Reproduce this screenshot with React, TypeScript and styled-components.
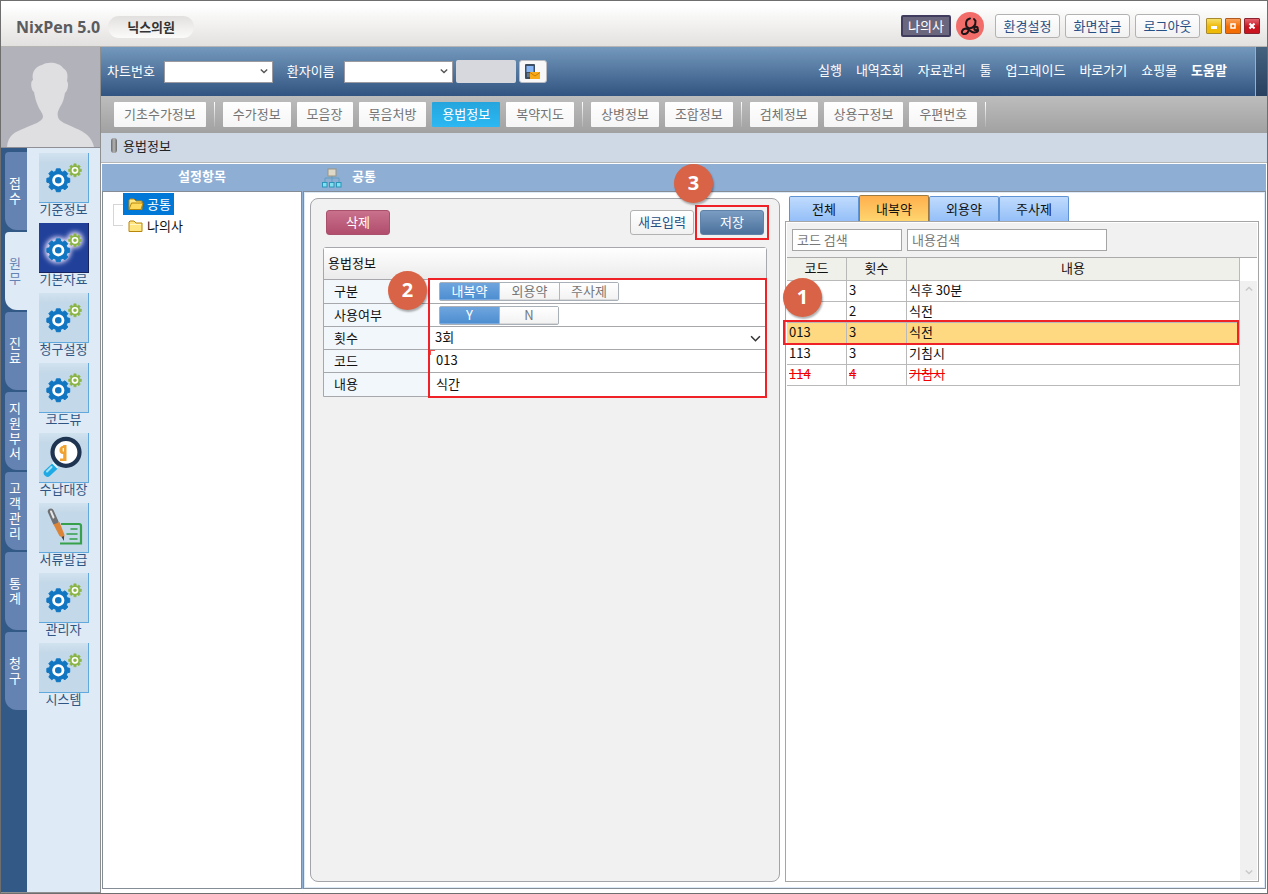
import React from 'react';
import styled, { createGlobalStyle, css } from 'styled-components';

const Global = createGlobalStyle`
  *, *::before, *::after { box-sizing: border-box; }
  body { margin: 0; }
  body, button, input, select {
    font-family: "Noto Sans CJK KR", sans-serif;
    font-size: 13px;
    line-height: 16px;
  }
  button, input, select { margin: 0; padding: 0; border: 0; border-radius: 0; background: none; color: inherit; }
  a { color: inherit; text-decoration: none; }
`;

/* ---------- frame ---------- */

const Window = styled.div`
  display: flex;
  flex-direction: column;
  min-height: 100vh;
  border: 1px solid #6e6e6e;
  background: #fff;
  color: #111;
`;

const TitleBar = styled.header`
  display: flex;
  align-items: center;
  height: 46px;
  padding: 6px 7px 0 15px;
  border-bottom: 1px solid #b7b5b3;
  background: linear-gradient(#fff 10%, #e3e1df);
`;

const AppName = styled.h1`
  flex: none;
  margin: 0 8px 0 0;
  font: bold 16px/22px "Open Sans", "Noto Sans", sans-serif;
  color: #5b5c5e;
`;

const ClinicName = styled.div`
  padding: 0 19px;
  border-radius: 11px;
  background: linear-gradient(#e2e0de, #fbfbfa);
  color: #333;
  font-weight: bold;
  line-height: 22px;
  white-space: nowrap;
`;

const TitleTools = styled.div`
  display: flex;
  align-items: center;
  gap: 5px;
  height: 28px;
  margin: 0 0 2px auto;
`;

const UserTag = styled.span`
  padding: 0 5px;
  border: 2px solid #403c5e;
  border-radius: 2px;
  background: #6a667d;
  color: #fff;
  line-height: 18px;
`;

const RoleIcon = styled.svg`
  width: 28px;
  height: 28px;
  margin-right: 6px;
`;

const PlainButton = styled.button`
  height: 24px;
  min-width: 65px;
  padding: 0 7px;
  border: 1px solid #b4b2b0;
  border-radius: 3px;
  background: linear-gradient(#fff, #f1f1f1);
  color: #264f85;
  white-space: nowrap;
`;

const WindowButtons = styled.div`
  display: flex;
  gap: 3px;
  margin-left: 1px;
`;

const WindowButton = styled.button<{ $from: string; $to: string; $edge: string }>`
  display: grid;
  place-items: center;
  width: 16px;
  height: 16px;
  border: 1px solid ${p => p.$edge};
  border-radius: 1px;
  background: linear-gradient(${p => p.$from}, ${p => p.$to} 55%);
`;

const Body = styled.div`
  display: flex;
  flex: 1;
`;

/* ---------- sidebar ---------- */

const Sidebar = styled.aside`
  display: flex;
  flex-direction: column;
  flex: none;
  width: 100px;
  border-right: 1px solid #8f8f8f;
  border-bottom: 1px solid #8f8f8f;
`;

const Photo = styled.svg`
  display: block;
  width: 100%;
  height: 101px;
  border-bottom: 1px solid #8f8f95;
  background: #b2b2bb;
`;

const SideColumns = styled.div`
  display: flex;
  flex: 1;
`;

const SideTabs = styled.nav`
  display: flex;
  flex-direction: column;
  gap: 2px;
  width: 26px;
  padding: 4px 0 0 4px;
  background: #335a86;
`;

const SideTab = styled.button<{ $active?: boolean }>`
  display: grid;
  place-items: center;
  height: 78px;
  padding: 0 2px 2px 0;
  border-radius: 4px 0 0 12px;
  background: ${p => (p.$active ? '#deeaf6' : '#6583b2')};
  color: ${p => (p.$active ? '#6583b2' : '#fff')};
  line-height: 15px;
`;

const StackedText = styled.span`
  width: 12px;
  word-break: break-all;
`;

const SideMenu = styled.nav`
  display: flex;
  flex-direction: column;
  align-items: center;
  gap: 4px;
  flex: 1;
  padding-top: 5px;
  background: #deeaf6;
`;

const SideItem = styled.a`
  display: flex;
  flex-direction: column;
  align-items: center;
  height: 66px;
  color: #2f5683;
  line-height: 12px;
  white-space: nowrap;
`;

const Tile = styled.svg<{ $active?: boolean }>`
  display: block;
  width: 50px;
  height: 50px;
  border-right: 1px solid ${p => (p.$active ? '#16235e' : '#61a9dd')};
  border-bottom: 1px solid ${p => (p.$active ? '#16235e' : '#61a9dd')};
  background: ${p => (p.$active ? '#20409a' : 'linear-gradient(#d2e2ef, #c3d8e8 20%)')};
`;

/* ---------- header and toolbars ---------- */

const Main = styled.main`
  display: flex;
  flex-direction: column;
  flex: 1;
  min-width: 0;
`;

const Header = styled.div`
  display: flex;
  align-items: center;
  height: 49px;
  padding-left: 6px;
  background: linear-gradient(#7499bd, #315480);
  color: #fff;
  white-space: nowrap;
`;

const FieldLabel = styled.label`
  margin-right: 9px;
  padding-bottom: 2px;
`;

const Chooser = styled.span<{ $wide?: boolean }>`
  position: relative;
  display: block;
  ${p => (p.$wide ? 'flex: 1; height: 22px;' : 'width: 109px; height: 22px; margin-right: 14px;')}

  &:nth-of-type(2) { margin-right: 3px; }

  select {
    width: 100%;
    height: 100%;
    padding: 0 5px 2px;
    appearance: none;
    ${p => !p.$wide && css`border: 1px solid #9a9aa0;`}
    background: #fff;
    color: #111;
  }
  svg {
    position: absolute;
    right: 5px;
    top: 50%;
    margin-top: -5px;
    pointer-events: none;
  }
`;

const ReadOnlyBox = styled.output`
  width: 60px;
  height: 23px;
  margin-right: 3px;
  border-radius: 2px;
  background: #d6d8dd;
`;

const MessageButton = styled.button`
  display: grid;
  place-items: center;
  width: 28px;
  height: 23px;
  border: 1px solid #b9bcc2;
  border-radius: 3px;
  background: #f8f8f8;
`;

const TopMenu = styled.nav`
  display: flex;
  align-items: center;
  gap: 14px;
  height: 100%;
  margin-left: auto;
  padding: 0 28px 4px 0;
  border-right: 1px solid #a5adb8;

  a:last-child { font-weight: bold; }
`;

const HeaderEnd = styled.div`
  width: 11px;
  height: 100%;
  background: linear-gradient(#45627f, #294060);
`;

const ToolRow = styled.nav`
  display: flex;
  align-items: center;
  gap: 6px;
  height: 37px;
  padding-left: 13px;
  background: linear-gradient(#bdbdbd, #a1a1a1);
`;

const ToolButton = styled.button<{ $active?: boolean }>`
  height: 25px;
  padding: 0 10px 2px;
  border-radius: 1px;
  background: ${p => (p.$active ? 'linear-gradient(#25a5dd, #2cb8f3)' : 'linear-gradient(#fff, #f5f5f5)')};
  color: ${p => (p.$active ? '#fff' : '#747474')};
  white-space: nowrap;
`;

const ToolDivider = styled.span`
  width: 1px;
  height: 25px;
  margin: 0 2px;
  background: linear-gradient(#fff, #b0b0b0);
`;

const Crumb = styled.div`
  display: flex;
  align-items: center;
  gap: 6px;
  height: 30px;
  padding: 0 10px 4px;
  border-bottom: 1px solid #b4b6b8;
  background: #cfd9e5;
  color: #222;

  &::before {
    content: "";
    width: 6px;
    height: 15px;
    border-radius: 3px;
    background: linear-gradient(90deg, #6a6a6a, #b4b4b4, #6a6a6a);
  }
`;

/* ---------- content ---------- */

const Content = styled.div`
  display: flex;
  flex-direction: column;
  flex: 1;
  padding: 1px 1px 4px 1px;
`;

const ContentHead = styled.div`
  display: flex;
  height: 27px;
  background: #8eaed4;
  color: #fff;
`;

const HeadTitle = styled.h2`
  display: flex;
  align-items: center;
  justify-content: center;
  gap: 10px;
  margin: 0;
  padding-bottom: 3px;
  font-size: 13px;
  line-height: 20px;

  &:first-child { width: 200px; }
  &:last-child { padding-left: 20px; }
  svg { margin-top: 4px; }
`;

const Columns = styled.div`
  display: flex;
  flex: 1;
  gap: 1px;
  background: #8eaed4;
`;

const Tree = styled.ul`
  flex: none;
  width: 200px;
  margin: 0;
  padding: 1px 0 0 10px;
  border: 1px solid #868c96;
  background: #fff;
  list-style: none;
`;

const TreeItem = styled.li`
  display: flex;
  align-items: center;
  height: 22px;
`;

const Branch = styled.span<{ $last?: boolean }>`
  align-self: ${p => (p.$last ? 'flex-start' : 'flex-end')};
  width: 10px;
  height: 11px;
  border-left: 1px solid #d6d6d6;
  ${p => (p.$last ? 'border-bottom' : 'border-top')}: 1px solid #d6d6d6;
`;

const TreeLabel = styled.a<{ $selected?: boolean }>`
  display: flex;
  align-items: center;
  gap: 3px;
  height: 22px;
  padding: 0 3px 0 5px;
  background: ${p => (p.$selected ? '#0078d7' : 'transparent')};
  color: ${p => (p.$selected ? '#fff' : '#111')};
`;

const Workspace = styled.div`
  display: grid;
  flex: 1;
  grid-template-columns: minmax(0, 470fr) minmax(0, 474fr);
  gap: 5px;
  padding: 6px;
  border: 1px solid #868c96;
  box-shadow: inset 0 0 0 1px #dce9f6;
  background: #fff;
`;

const FormCard = styled.section`
  padding: 11px 12px;
  border: 1px solid #a2a4aa;
  border-radius: 8px;
  background: #f1f1f1;
`;

const Actions = styled.div`
  display: flex;
  gap: 6px;
  margin: 0 3px 12px;
`;

const ActionButton = styled(PlainButton)<{ $tone?: 'delete' | 'save' }>`
  height: 25px;
  min-width: 64px;
  padding-bottom: 2px;
  ${p => p.$tone === 'delete' && css`
    margin-right: auto;
    border-color: #a8506c;
    background: linear-gradient(#c9718c, #b14d6d);
    color: #fff;
  `}
  ${p => p.$tone === 'save' && css`
    border-color: #5f82a8;
    background: linear-gradient(#7a9cc2, #4b729c);
    color: #fff;
  `}
`;

const Marked = styled.div`
  position: relative;
  display: flex;
`;

const MarkBox = styled.span<{ $top: number; $right: number; $left: number; $bottom?: number; $height?: number }>`
  position: absolute;
  top: ${p => p.$top}px;
  right: ${p => p.$right}px;
  left: ${p => p.$left}px;
  ${p => (p.$height ? `height: ${p.$height}px;` : `bottom: ${p.$bottom}px;`)}
  border: 2px solid #ee2227;
  pointer-events: none;
`;

const StepBadge = styled.span<{ $top: number; $left: number }>`
  position: absolute;
  z-index: 1;
  top: ${p => p.$top}px;
  left: ${p => p.$left}px;
  width: 39px;
  height: 39px;
  border-radius: 50%;
  background: #d96346;
  box-shadow: 1px 2px 2px rgba(0, 0, 0, 0.3);
  color: #fff;
  font: bold 20px/37px "Open Sans", "Noto Sans", sans-serif;
  text-align: center;
`;

const Form = styled.form`
  position: relative;
  border: 1px solid #a6a8ac;
  border-radius: 3px 3px 0 0;
  background: #fff;
`;

const FormTitle = styled.h3`
  margin: 0;
  padding: 0 0 2px 4px;
  background: linear-gradient(#fff, #ebebeb);
  font-size: 13px;
  font-weight: normal;
  line-height: 29px;
`;

const FormRow = styled.div<{ $tall?: boolean }>`
  display: flex;
  align-items: stretch;
  height: ${p => (p.$tall ? 24 : 23)}px;
  border-top: 1px solid #a6a8ac;
`;

const RowLabel = styled.label`
  flex: none;
  width: 106px;
  padding-left: 10px;
  border-right: 1px solid #a6a8ac;
  background: #f2f7fb;
  line-height: 21px;
`;

const TextInput = styled.input`
  flex: 1;
  min-width: 0;
  padding: 0 0 2px 6px;
`;

const Segments = styled.div`
  display: flex;
  align-self: center;
  height: 19px;
  margin-left: 9px;
  border: 1px solid #a9b0b8;
  border-radius: 2px;
`;

const Segment = styled.button<{ $on?: boolean }>`
  width: 60px;
  padding-bottom: 2px;
  border-right: 1px solid #b5b5b5;
  background: ${p => (p.$on ? 'linear-gradient(#6fa5de, #4c8dd0)' : 'linear-gradient(#fff, #f2f2f2)')};
  box-shadow: inset 0 -1px 0 ${p => (p.$on ? '#78aae0' : '#dadada')};
  color: ${p => (p.$on ? '#fff' : '#777')};
  &:last-child { width: 58px; border-right: 0; }
`;

const Corner = styled.span`
  position: absolute;
  left: 106px;
  top: 102px;
  width: 5px;
  height: 5px;
  border-top: 1px solid #ee5050;
  border-left: 1px solid #ee5050;
`;

/* ---------- list ---------- */

const ListSide = styled.section`
  position: relative;
  display: flex;
  flex-direction: column;
`;

const Tabs = styled.div`
  display: flex;
  align-items: flex-end;
  height: 24px;
  margin: -1px 0 0 4px;
`;

const Tab = styled.button<{ $active?: boolean }>`
  width: 70px;
  height: ${p => (p.$active ? 26 : 25)}px;
  border: 1px solid ${p => (p.$active ? '#9b7a45' : '#5f93d4')};
  border-bottom: 0;
  border-radius: 2px 2px 0 0;
  background: ${p => (p.$active ? 'linear-gradient(#ffb04d, #ffd56f)' : 'linear-gradient(#c0dbfd, #94bff8)')};
`;

const ListPanel = styled.div`
  display: flex;
  flex-direction: column;
  flex: 1;
  padding: 1px;
  border: 1px solid #a5a5a5;
`;

const SearchBar = styled.div`
  display: flex;
  gap: 5px;
  height: 35px;
  padding: 6px 0 0 5px;
  border-bottom: 1px solid #ababab;
  background: #f1f1f1;
`;

const SearchInput = styled.input<{ $wide?: boolean }>`
  width: ${p => (p.$wide ? 200 : 110)}px;
  height: 22px;
  padding: 0 4px 2px;
  border: 1px solid #a5a5a5;
  background: #fff;
  &::placeholder { color: #777; opacity: 1; }
`;

const ListBody = styled.div`
  display: flex;
  flex: 1;
`;

const TableArea = styled.div`
  position: relative;
  flex: 1;
  min-width: 0;
`;

const Table = styled.table`
  width: 100%;
  table-layout: fixed;
  border-collapse: separate;
  border-spacing: 0;

  th, td {
    height: 21px;
    padding: 0 2px;
    border-right: 1px solid #b9b9b9;
    border-bottom: 1px solid #b9b9b9;
    line-height: 17px;
    text-align: left;
    vertical-align: top;
  }
  th {
    height: 23px;
    background: #f0f0eb;
    font-weight: normal;
    line-height: 20px;
    text-align: center;
  }
  th:not(:last-child) { width: 60px; }
`;

const DataRow = styled.tr<{ $state?: 'selected' | 'stopped' }>`
  ${p => p.$state === 'selected' && css`background: #ffd982;`}
  ${p => p.$state === 'stopped' && css`color: #f00000; text-decoration: line-through;`}
`;

const ScrollTrack = styled.div`
  display: flex;
  flex-direction: column;
  justify-content: space-between;
  align-items: center;
  width: 17px;
  margin-top: 23px;
  padding: 4px 0;
  background: #f0f0f0;
`;

/* ---------- drawings ---------- */

const Chevron = ({ up = false, color = '#555', size = 8, weight = 1.7 }: { up?: boolean; color?: string; size?: number; weight?: number }) => (
  <svg width={size} height={size} viewBox="0 0 10 10" fill="none" stroke={color} strokeWidth={weight} aria-hidden="true">
    <path d={up ? 'M1 7l4-4 4 4' : 'M1 3l4 4 4-4'} />
  </svg>
);

const gearPath = (cx: number, cy: number, outer: number, inner: number) => {
  const points: string[] = [];
  for (let i = 0; i < 8; i++) {
    const mid = (i * Math.PI) / 4;
    [[-0.27, inner], [-0.17, outer], [0.17, outer], [0.27, inner]].forEach(([turn, r]) => {
      points.push(`${(cx + r * Math.sin(mid + turn)).toFixed(2)} ${(cy - r * Math.cos(mid + turn)).toFixed(2)}`);
    });
  }
  return `M${points.join('L')}Z`;
};

const Gears = ({ glow = false }: { glow?: boolean }) => (
  <>
    {glow && (
      <g filter="url(#soft)" fill="#f3e6ff">
        <circle cx="19" cy="27" r="13" />
        <circle cx="36" cy="17" r="8" />
        <defs>
          <filter id="soft" x="-50%" y="-50%" width="200%" height="200%"><feGaussianBlur stdDeviation="2.4" /></filter>
        </defs>
      </g>
    )}
    <path d={gearPath(19.3, 27.3, 11.6, 9.3)} fill="#1176c2" stroke="#1176c2" strokeWidth="1" strokeLinejoin="round" />
    <circle cx="19.3" cy="27.3" r="4.7" fill="#1176c2" stroke="#fff" strokeWidth="2.8" />
    <path d={gearPath(36, 17.3, 6.6, 5)} fill="#8ab445" stroke="#8ab445" strokeWidth=".5" strokeLinejoin="round" />
    <circle cx="36" cy="17.3" r="2.6" fill="#8ab445" stroke="#fff" strokeWidth="1.6" />
  </>
);

const Magnifier = () => (
  <>
    <path d="M8.500 40L15.500 33.500" stroke="#1eaae4" strokeWidth="7.500" strokeLinecap="round" />
    <path d="M8 38.500l4.500-4.500" stroke="#a5e2fa" strokeWidth="2" strokeLinecap="round" />
    <path d="M13.500 29.500l5.500 5.500" stroke="#e8f1f8" strokeWidth="2" />
    <circle cx="27" cy="19.300" r="13.500" fill="#fff" stroke="#1f3450" strokeWidth="4.2" />
    <path d="M27.500 12v16h-6.500v-2.500h3.200v-4.500c-5 .5-5-8 0-8.300v-.7z" fill="#f0a330" />
    <path d="M24.300 15v3.500" stroke="#fff" strokeWidth="1.2" />
  </>
);

const PenNote = () => (
  <>
    <path d="M22 21h18q2 0 2 2v17.500H21" fill="none" stroke="#36a04b" strokeWidth="2.2" />
    <path d="M32 26h6M28 31h10M31 36h7" stroke="#36a04b" strokeWidth="1.5" strokeLinecap="round" />
    <path d="M11.800 8.500l4.700 10.500" stroke="#707174" strokeWidth="6" strokeLinecap="round" />
    <path d="M12 8.500l2.500 6" stroke="#e4e7ea" strokeWidth="2" strokeLinecap="round" />
    <path d="M14.500 21.500l6-2.500 5 13-.5 3-4.500-2z" fill="#db8437" />
    <path d="M22.500 34l2.500-1v5z" fill="#444" />
  </>
);

const Folder = ({ open = false }: { open?: boolean }) => (
  <svg width="16" height="14" viewBox="0 0 16 14" aria-hidden="true">
    <path d="M1 12.500V3l1-1h4l2 2h6v8.500z" fill="#ffe680" stroke="#b8860b" />
    {open
      ? <path d="M1 12.500L3.500 6H15l-2 6.500z" fill="#ffd95a" stroke="#b8860b" />
      : <path d="M2 5.500h11" stroke="#fff6c4" />}
  </svg>
);

const Hierarchy = () => (
  <svg width="20" height="20" viewBox="0 0 20 20" aria-hidden="true">
    <path d="M10 7v7M3 14v-4h14v4" fill="none" stroke="#5f9fc0" />
    <rect x="6" y="1" width="8" height="7" fill="#ddd8c8" stroke="#9a9482" />
    {[1, 8, 15].map(x => <rect key={x} x={x - 0.5} y="14.500" width="4.500" height="4.500" fill="#7fe0f2" stroke="#2d96b8" />)}
  </svg>
);

/* ---------- data ---------- */

const sideTabs = ['접수', '원무', '진료', '지원부서', '고객관리', '통계', '청구'];

const sideItems: { name: string; art?: 'lens' | 'pen' }[] = [
  { name: '기준정보' },
  { name: '기본자료' },
  { name: '청구설정' },
  { name: '코드뷰' },
  { name: '수납대장', art: 'lens' },
  { name: '서류발급', art: 'pen' },
  { name: '관리자' },
  { name: '시스템' },
];

const topMenu = ['실행', '내역조회', '자료관리', '툴', '업그레이드', '바로가기', '쇼핑몰', '도움말'];

const toolGroups = [
  ['기초수가정보'],
  ['수가정보', '모음장', '묶음처방', '용법정보', '복약지도'],
  ['상병정보', '조합정보'],
  ['검체정보', '상용구정보', '우편번호'],
];

const rows: { code: string; count: string; text: string; state?: 'selected' | 'stopped' }[] = [
  { code: '', count: '3', text: '식후 30분' },
  { code: '', count: '2', text: '식전' },
  { code: '013', count: '3', text: '식전', state: 'selected' },
  { code: '113', count: '3', text: '기침시' },
  { code: '114', count: '4', text: '기침시', state: 'stopped' },
];

export default function App() {
  return (
    <Window>
      <Global />
      <TitleBar>
        <AppName>NixPen 5.0</AppName>
        <ClinicName>닉스의원</ClinicName>
        <TitleTools>
          <UserTag>나의사</UserTag>
          <RoleIcon viewBox="0 0 28 28" role="img" aria-label="의사">
            <circle cx="14" cy="14" r="14" fill="#f26d69" />
            <g fill="none" stroke="#1c1416" strokeWidth="2" strokeLinecap="round">
              <path d="M14 6.500c-5 1-5 8-1.500 9.500 4 1 7.500-2.500 7-7L18 7" />
              <path d="M12 16c2 4-2 6.500-4.500 6-3-1-1.500-5 2-5.500 4 0 5 4.500 9 4 2.500-.3 4-1 3.500-2.500" />
              <circle cx="20" cy="16.500" r="1.700" />
            </g>
          </RoleIcon>
          <PlainButton>환경설정</PlainButton>
          <PlainButton>화면잠금</PlainButton>
          <PlainButton>로그아웃</PlainButton>
          <WindowButtons>
            <WindowButton $from="#f5df6a" $to="#efb908" $edge="#a88a2c" aria-label="최소화">
              <svg width="8" height="8"><rect x="1" y="4" width="6" height="3" fill="#fff" /></svg>
            </WindowButton>
            <WindowButton $from="#f9a25a" $to="#f46c04" $edge="#b05a20" aria-label="최대화">
              <svg width="8" height="8"><rect x="2" y="2" width="4" height="4" fill="none" stroke="#fff" strokeWidth="1.500" /></svg>
            </WindowButton>
            <WindowButton $from="#e4626c" $to="#c9141f" $edge="#8c2430" aria-label="닫기">
              <svg width="8" height="8"><path d="M1.500 1.500l5 5M6.500 1.500l-5 5" stroke="#fff" strokeWidth="2.200" /></svg>
            </WindowButton>
          </WindowButtons>
        </TitleTools>
      </TitleBar>

      <Body>
        <Sidebar>
          <Photo viewBox="0 0 99 100" preserveAspectRatio="xMidYMax meet" aria-hidden="true">
            <path
              fill="#dfdfe1"
              d="M6 100c1-12 8-15 18-19 9-4 17-6 18-11 0-4-3-6-5-11-2-4-3-9-4-14-3-2-4-11-1-12-2-9 4-14 9-15 6-4 18-2 21 3 5 3 5 8 4 13 2 2 1 10-2 12-1 5-2 10-5 14-2 4-3 6-2 10 1 5 9 7 17 11 10 4 17 9 19 19z"
            />
          </Photo>
          <SideColumns>
            <SideTabs>
              {sideTabs.map(name => (
                <SideTab key={name} $active={name === '원무'}><StackedText>{name}</StackedText></SideTab>
              ))}
            </SideTabs>
            <SideMenu>
              {sideItems.map(({ name, art }) => (
                <SideItem key={name} href="#">
                  <Tile viewBox="0 0 49 49" $active={name === '기본자료'} aria-hidden="true">
                    {art === 'lens' ? <Magnifier /> : art === 'pen' ? <PenNote /> : <Gears glow={name === '기본자료'} />}
                  </Tile>
                  {name}
                </SideItem>
              ))}
            </SideMenu>
          </SideColumns>
        </Sidebar>

        <Main>
          <Header>
            <FieldLabel htmlFor="chart">차트번호</FieldLabel>
            <Chooser><select id="chart" /><Chevron /></Chooser>
            <FieldLabel htmlFor="patient">환자이름</FieldLabel>
            <Chooser><select id="patient" /><Chevron /></Chooser>
            <ReadOnlyBox />
            <MessageButton aria-label="문자 보내기">
              <svg width="17" height="17" viewBox="0 0 17 17">
                <rect x="1" y="1" width="10" height="15" rx="1" fill="#3d4e62" />
                <rect x="2.500" y="3" width="7" height="6" fill="#86b6f5" />
                <path d="M3 11h6M3 13h6" stroke="#8fa0b4" />
                <rect x="6" y="9" width="10" height="7" fill="#f7ab1c" />
                <path d="M6 9.500l5 3.500 5-3.500" fill="none" stroke="#c97c08" />
              </svg>
            </MessageButton>
            <TopMenu>
              {topMenu.map(name => <a key={name} href="#">{name}</a>)}
            </TopMenu>
            <HeaderEnd />
          </Header>

          <ToolRow>
            {toolGroups.map(group => (
              <React.Fragment key={group[0]}>
                {group.map(name => <ToolButton key={name} $active={name === '용법정보'}>{name}</ToolButton>)}
                <ToolDivider />
              </React.Fragment>
            ))}
          </ToolRow>

          <Crumb>용법정보</Crumb>

          <Content>
            <ContentHead>
              <HeadTitle>설정항목</HeadTitle>
              <HeadTitle><Hierarchy />공통</HeadTitle>
            </ContentHead>
            <Columns>
              <Tree>
                <TreeItem>
                  <Branch />
                  <TreeLabel href="#" $selected><Folder open />공통</TreeLabel>
                </TreeItem>
                <TreeItem>
                  <Branch $last />
                  <TreeLabel href="#"><Folder />나의사</TreeLabel>
                </TreeItem>
              </Tree>

              <Workspace>
                <FormCard>
                  <Actions>
                    <ActionButton $tone="delete">삭제</ActionButton>
                    <ActionButton>새로입력</ActionButton>
                    <Marked>
                      <ActionButton $tone="save">저장</ActionButton>
                      <MarkBox $top={-5} $right={-5} $bottom={-5} $left={-5} />
                      <StepBadge $top={-46} $left={-26}>3</StepBadge>
                    </Marked>
                  </Actions>

                  <Form onSubmit={e => e.preventDefault()}>
                    <FormTitle>용법정보</FormTitle>
                    <FormRow $tall>
                      <RowLabel as="span" id="kind">구분</RowLabel>
                      <Segments role="group" aria-labelledby="kind">
                        <Segment type="button" aria-pressed $on>내복약</Segment>
                        <Segment type="button">외용약</Segment>
                        <Segment type="button">주사제</Segment>
                      </Segments>
                    </FormRow>
                    <FormRow>
                      <RowLabel as="span" id="used">사용여부</RowLabel>
                      <Segments role="group" aria-labelledby="used">
                        <Segment type="button" aria-pressed $on>Y</Segment>
                        <Segment type="button">N</Segment>
                      </Segments>
                    </FormRow>
                    <FormRow>
                      <RowLabel htmlFor="count">횟수</RowLabel>
                      <Chooser $wide>
                        <select id="count"><option>3회</option></select>
                        <Chevron color="#333" size={11} weight={1.4} />
                      </Chooser>
                    </FormRow>
                    <FormRow>
                      <RowLabel htmlFor="code">코드</RowLabel>
                      <TextInput id="code" defaultValue="013" />
                    </FormRow>
                    <FormRow $tall>
                      <RowLabel htmlFor="text">내용</RowLabel>
                      <TextInput id="text" defaultValue="식간" />
                    </FormRow>
                    <Corner />
                    <MarkBox $top={30} $right={-1} $bottom={-2} $left={104} />
                    <StepBadge $top={23} $left={64}>2</StepBadge>
                  </Form>
                </FormCard>

                <ListSide>
                  <Tabs role="tablist">
                    {['전체', '내복약', '외용약', '주사제'].map(name => (
                      <Tab key={name} role="tab" aria-selected={name === '내복약'} $active={name === '내복약'}>{name}</Tab>
                    ))}
                  </Tabs>
                  <ListPanel>
                    <SearchBar>
                      <SearchInput placeholder="코드 검색" aria-label="코드 검색" />
                      <SearchInput $wide placeholder="내용검색" aria-label="내용검색" />
                    </SearchBar>
                    <ListBody>
                      <TableArea>
                        <Table>
                          <thead>
                            <tr><th>코드</th><th>횟수</th><th>내용</th></tr>
                          </thead>
                          <tbody>
                            {rows.map((row, i) => (
                              <DataRow key={i} $state={row.state}>
                                <td>{row.code}</td>
                                <td>{row.count}</td>
                                <td>{row.text}</td>
                              </DataRow>
                            ))}
                          </tbody>
                        </Table>
                        <MarkBox $top={62} $right={1} $left={-4} $height={25} />
                        <StepBadge $top={20} $left={-4}>1</StepBadge>
                      </TableArea>
                      <ScrollTrack>
                        <Chevron up color="#c8c8c8" />
                        <Chevron color="#c8c8c8" />
                      </ScrollTrack>
                    </ListBody>
                  </ListPanel>
                </ListSide>
              </Workspace>
            </Columns>
          </Content>
        </Main>
      </Body>
    </Window>
  );
}
